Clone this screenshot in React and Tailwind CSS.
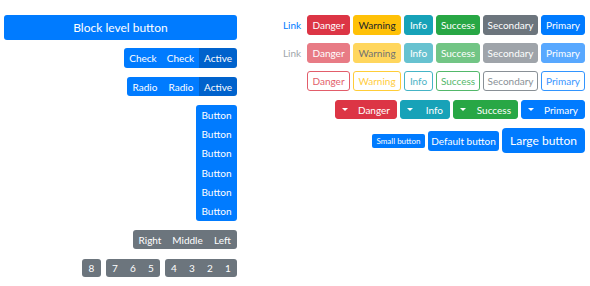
import React from 'react';

const solid = {
  danger: 'bg-[#dc3545] border-[#dc3545] text-white',
  warning: 'bg-[#ffc107] border-[#ffc107] text-[#212529]',
  info: 'bg-[#17a2b8] border-[#17a2b8] text-white',
  success: 'bg-[#28a745] border-[#28a745] text-white',
  secondary: 'bg-[#6c757d] border-[#6c757d] text-white',
  primary: 'bg-[#007bff] border-[#007bff] text-white',
};

const outline = {
  danger: 'bg-white border-[#dc3545] text-[#dc3545]',
  warning: 'bg-white border-[#ffc107] text-[#ffc107]',
  info: 'bg-white border-[#17a2b8] text-[#17a2b8]',
  success: 'bg-white border-[#28a745] text-[#28a745]',
  secondary: 'bg-white border-[#6c757d] text-[#6c757d]',
  primary: 'bg-white border-[#007bff] text-[#007bff]',
};

// rtl: first item sits on the right
const row = [
  { v: 'primary', label: 'Primary', w: 'w-[44px]' },
  { v: 'secondary', label: 'Secondary', w: 'w-[55px]' },
  { v: 'success', label: 'Success', w: 'w-[44px]' },
  { v: 'info', label: 'Info', w: 'w-[29px]' },
  { v: 'warning', label: 'Warning', w: 'w-[48px]' },
  { v: 'danger', label: 'Danger', w: 'w-[43px]' },
];

const splits = [
  { v: 'primary', label: 'Primary', w: 'w-[64px]' },
  { v: 'success', label: 'Success', w: 'w-[65px]' },
  { v: 'info', label: 'Info', w: 'w-[50px]' },
  { v: 'danger', label: 'Danger', w: 'w-[62px]' },
];

const Caret = () => (
  <span className="w-0 h-0 border-l-[3px] border-r-[3px] border-t-[3px] border-l-transparent border-r-transparent border-t-white" />
);

export default function App() {
  return (
    <div
      dir="rtl"
      className="w-[590px] h-[286px] bg-white flex gap-[18px] pr-[5px] pt-[15px] text-[10px] leading-none"
      style={{ fontFamily: 'Lato, "Open Sans", sans-serif' }}
    >
      {/* first column (right side) */}
      <div className="w-[330px] flex flex-col items-start">
        <div className="flex gap-[3px] h-5">
          {row.map((b) => (
            <button key={b.label} className={`${b.w} h-5 rounded-[3px] border flex items-center justify-center ${solid[b.v]}`}>
              {b.label}
            </button>
          ))}
          <span className="w-[24px] flex items-center justify-center text-[#007bff]">Link</span>
        </div>

        <div className="flex gap-[3px] h-5 mt-[8px] opacity-65">
          {row.map((b) => (
            <button key={b.label} className={`${b.w} h-5 rounded-[3px] border flex items-center justify-center ${solid[b.v]}`}>
              {b.label}
            </button>
          ))}
          <span className="w-[24px] flex items-center justify-center text-[#6c757d]">Link</span>
        </div>

        <div className="flex gap-[3px] h-5 mt-[8px]">
          {row.map((b) => (
            <button key={b.label} className={`${b.w} h-5 rounded-[3px] border flex items-center justify-center opacity-80 ${outline[b.v]}`}>
              {b.label}
            </button>
          ))}
        </div>

        <div className="flex gap-[3px] h-[19px] mt-[9px]">
          {splits.map((b) => (
            <button key={b.label} className={`${b.w} h-[19px] rounded-[3px] border flex items-center justify-between px-[6px] ${solid[b.v]}`}>
              <span>{b.label}</span>
              <Caret />
            </button>
          ))}
        </div>

        <div className="flex gap-[3px] items-center h-[25px] mt-[9px]">
          <button className="w-[83px] h-[25px] rounded-[4px] bg-[#007bff] text-white text-[12px] flex items-center justify-center">
            Large button
          </button>
          <button className="w-[71px] h-5 rounded-[3px] bg-[#007bff] text-white flex items-center justify-center">
            Default button
          </button>
          <button className="w-[53px] h-[14px] rounded-[2px] bg-[#007bff] text-white text-[8px] flex items-center justify-center">
            Small button
          </button>
        </div>
      </div>

      {/* second column (left side) */}
      <div className="w-[233px] flex flex-col items-start">
        <button className="w-[233px] h-[25px] rounded-[3px] bg-[#007bff] text-white text-[12px] flex items-center justify-center">
          Block level button
        </button>

        <div className="flex h-5 mt-[8px] rounded-[3px] overflow-hidden text-white">
          <span className="w-[38px] bg-[#0062cc] flex items-center justify-center">Active</span>
          <span className="w-[37px] bg-[#007bff] flex items-center justify-center">Check</span>
          <span className="w-[38px] bg-[#007bff] flex items-center justify-center">Check</span>
        </div>

        <div className="flex h-[19px] mt-[9px] rounded-[3px] overflow-hidden text-white">
          <span className="w-[38px] bg-[#0062cc] flex items-center justify-center">Active</span>
          <span className="w-[36px] bg-[#007bff] flex items-center justify-center">Radio</span>
          <span className="w-[36px] bg-[#007bff] flex items-center justify-center">Radio</span>
        </div>

        <div className="flex flex-col w-[41px] h-[116px] mt-[9px] rounded-[3px] overflow-hidden bg-[#007bff] text-white">
          {[0, 1, 2, 3, 4, 5].map((i) => (
            <span key={i} className="flex-1 flex items-center justify-center">Button</span>
          ))}
        </div>

        <div className="flex h-[19px] mt-[9px] rounded-[3px] overflow-hidden bg-[#6c757d] text-white">
          <span className="w-[29px] flex items-center justify-center">Left</span>
          <span className="w-[41px] flex items-center justify-center">Middle</span>
          <span className="w-[34px] flex items-center justify-center">Right</span>
        </div>

        <div className="flex gap-[5px] h-[18px] mt-[10px] text-white">
          <div className="flex rounded-[3px] overflow-hidden bg-[#6c757d]">
            {['1', '2', '3', '4'].map((n) => (
              <span key={n} className="w-[18px] flex items-center justify-center">{n}</span>
            ))}
          </div>
          <div className="flex rounded-[3px] overflow-hidden bg-[#6c757d]">
            {['5', '6', '7'].map((n) => (
              <span key={n} className="w-[18px] flex items-center justify-center">{n}</span>
            ))}
          </div>
          <div className="flex rounded-[3px] overflow-hidden bg-[#6c757d]">
            <span className="w-[19px] flex items-center justify-center">8</span>
          </div>
        </div>
      </div>
    </div>
  );
}
